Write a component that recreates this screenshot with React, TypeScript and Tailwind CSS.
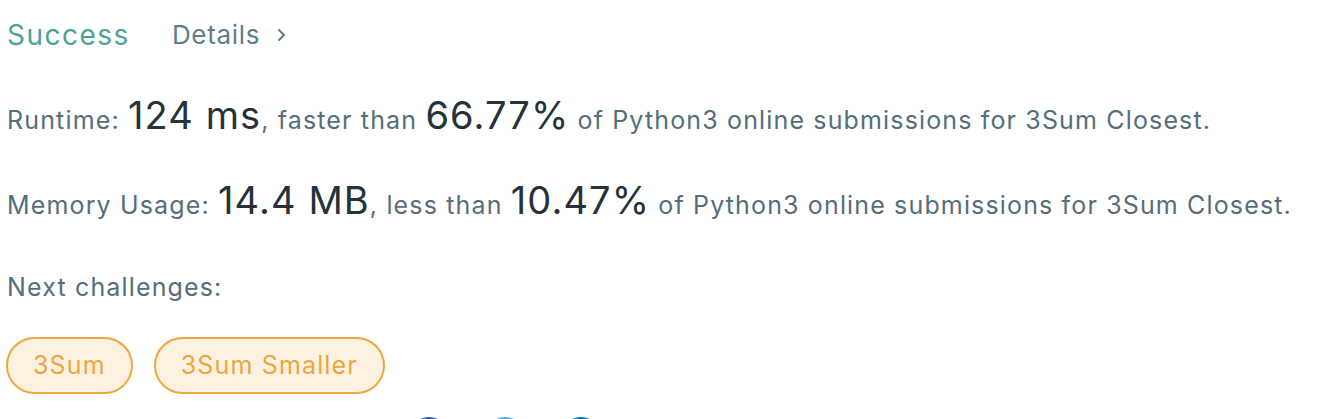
import React from 'react';

const challenges = ['3Sum', '3Sum Smaller'];

const Stat = ({ label, value, cmp, pct }: { label: string; value: string; cmp: string; pct: string }) => (
  <p className="h-[85px] flex items-center text-[25px] tracking-[1.15px] text-[#546e7a] whitespace-nowrap">
    <span>
      {label}: <span className="text-[38px] tracking-[1.1px] text-[#263238]">{value}</span>, {cmp}{' '}
      <span className="text-[38px] tracking-[1.1px] text-[#263238]">{pct}</span> of Python3 online submissions for 3Sum Closest.
    </span>
  </p>
);

export default function App() {
  return (
    <div className="w-[1330px] h-[419px] overflow-hidden bg-white pl-[7px] font-['Inter',sans-serif]">
      <div className="h-[70px] flex items-center">
        <h3 className="text-[28px] tracking-[1.5px] text-[#4ba495] leading-none">Success</h3>
        <a className="ml-[42px] flex items-center gap-[17px] text-[26px] tracking-[0.7px] text-[#607d8b] leading-none">
          Details
          <svg width="9" height="14" viewBox="0 0 9 14" fill="none">
            <path d="M2 2l5 5-5 5" stroke="#607d8b" strokeWidth="2" strokeLinecap="round" strokeLinejoin="round" />
          </svg>
        </a>
      </div>
      <div className="mt-[3px]">
        <Stat label="Runtime" value="124 ms" cmp="faster than" pct="66.77%" />
        <Stat label="Memory Usage" value="14.4 MB" cmp="less than" pct="10.47%" />
      </div>
      <p className="mt-[17px] h-[56px] flex items-center text-[25px] tracking-[1.15px] text-[#546e7a]">Next challenges:</p>
      <div className="mt-[21px] flex gap-[21px] -ml-[1px]">
        {challenges.map((c) => (
          <a
            key={c}
            className="h-[57px] px-[25px] flex items-center rounded-full border-2 border-[#f0a640] bg-[#fdf2e1] text-[25px] tracking-[1.15px] text-[#f0a53c]"
          >
            {c}
          </a>
        ))}
      </div>
      <div className="mt-[23px] ml-[402px] flex gap-[36px]">
        <span className="w-[40px] h-[40px] rounded-full bg-[#3b5998]" />
        <span className="w-[40px] h-[40px] rounded-full bg-[#55acee]" />
        <span className="w-[40px] h-[40px] rounded-full bg-[#0077b5]" />
      </div>
    </div>
  );
}
